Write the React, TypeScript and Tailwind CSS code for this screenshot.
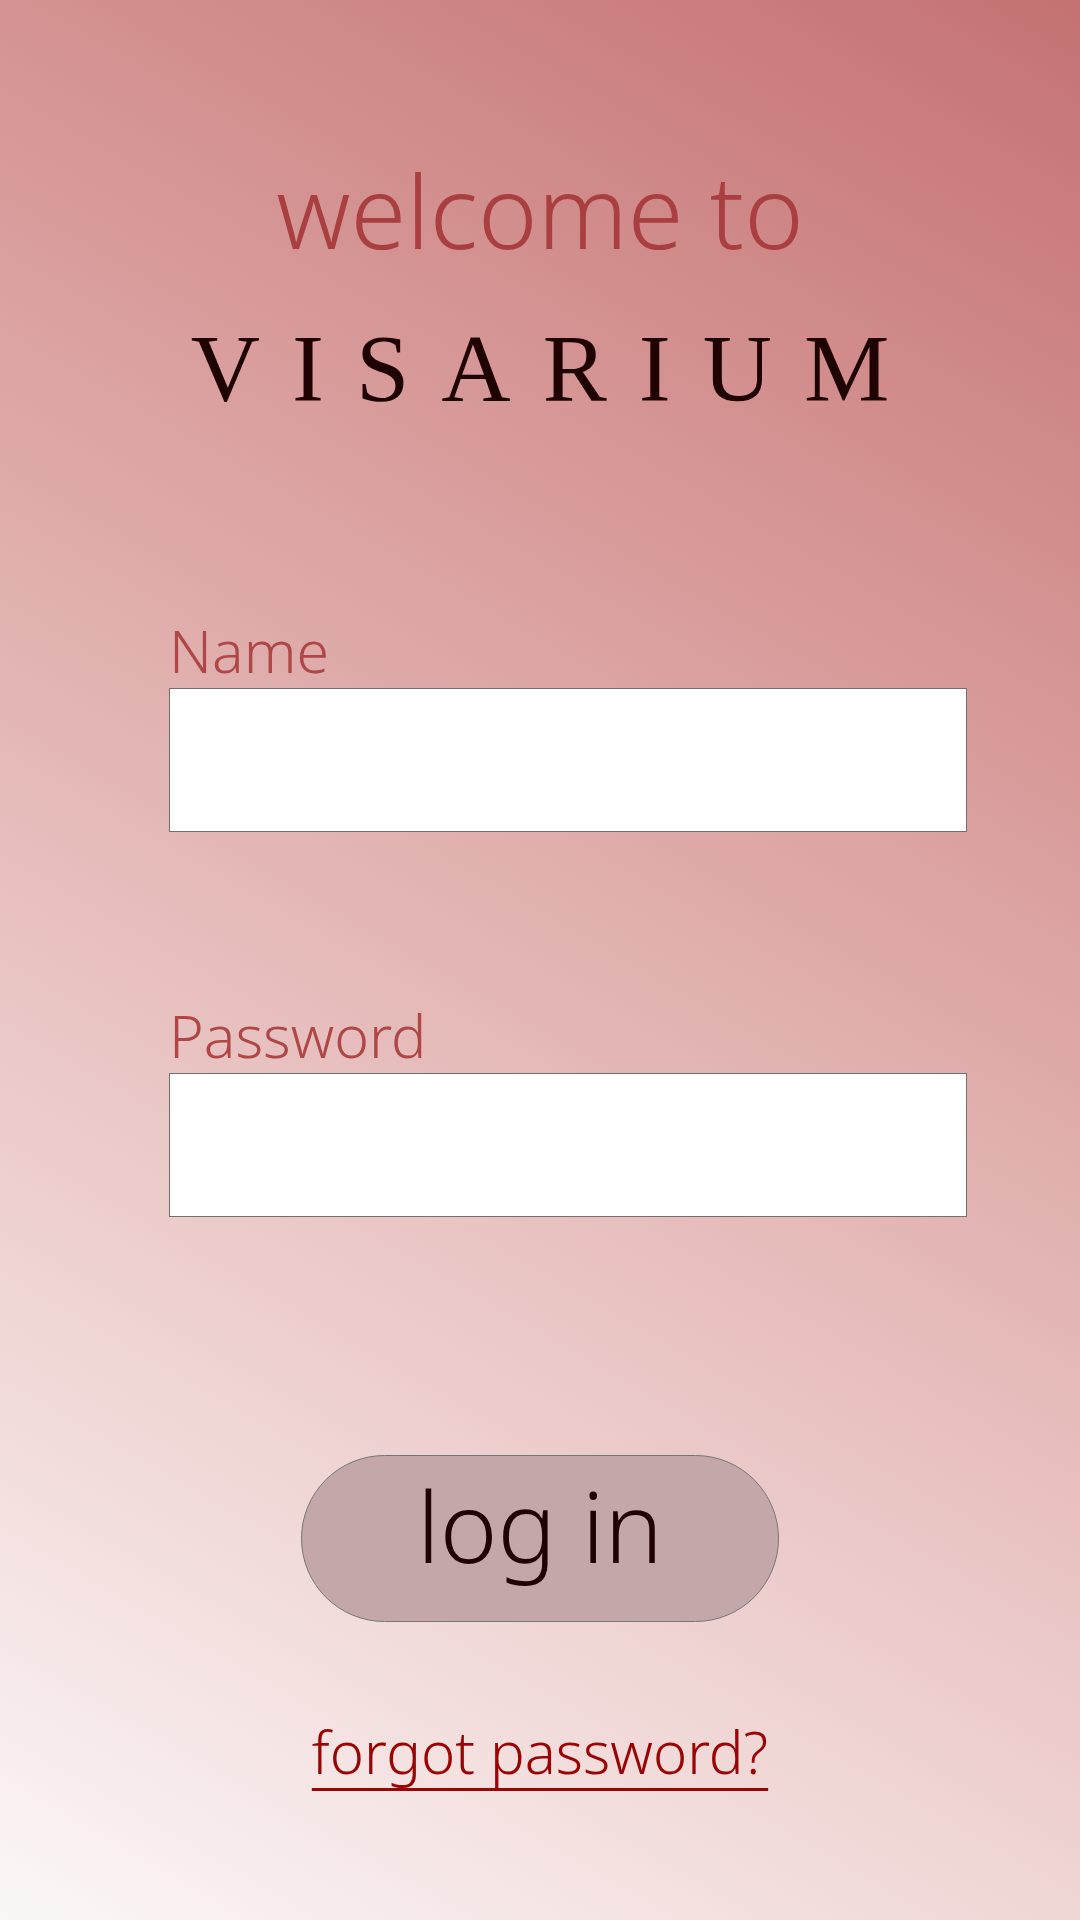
import React from 'react';

const sans = { fontFamily: '"Noto Sans", "Open Sans", sans-serif' };

const Field: React.FC<{ label: string; type?: string; className?: string }> = ({ label, type = 'text', className }) => (
  <div className={className}>
    <label className="block text-[59px] font-light leading-none text-[#b04747]" style={sans}>
      {label}
    </label>
    <input
      type={type}
      className="mt-2 block h-[144px] w-[798px] border border-[#707070] bg-white outline-none"
    />
  </div>
);

const App: React.FC = () => {
  return (
    <div className="flex h-[1920px] w-[1080px] flex-col bg-linear-30 from-[#fbf7f7] to-[#c47272]">
      {/* heading */}
      <h1
        className="mt-[160px] text-center text-[101px] font-light leading-none text-[#a93f40]"
        style={sans}
      >
        welcome to
      </h1>
      <h2
        className="mt-[60px] pl-[32px] text-center text-[96px] leading-none tracking-[32px] text-[#1f0202]"
        style={{ fontFamily: '"Liberation Serif", serif' }}
      >
        VISARIUM
      </h2>

      {/* form */}
      <form className="ml-[169px] mt-[204px] flex flex-col">
        <Field label="Name" />
        <Field label="Password" type="password" className="mt-[174px]" />
      </form>

      <button
        type="button"
        className="mx-auto mt-[238px] flex h-[167px] w-[478px] items-center justify-center rounded-full border border-[#767676] bg-[#c4a8a9] text-[98px] font-light leading-none text-[#200203]"
        style={sans}
      >
        <span className="-mt-[28px]">log in</span>
      </button>

      <a
        href="#"
        className="mx-auto mt-[101px] text-[58px] font-light leading-none text-[#990505] underline decoration-[3px] underline-offset-[14px]"
        style={sans}
      >
        forgot password?
      </a>
    </div>
  );
};

export default App;
